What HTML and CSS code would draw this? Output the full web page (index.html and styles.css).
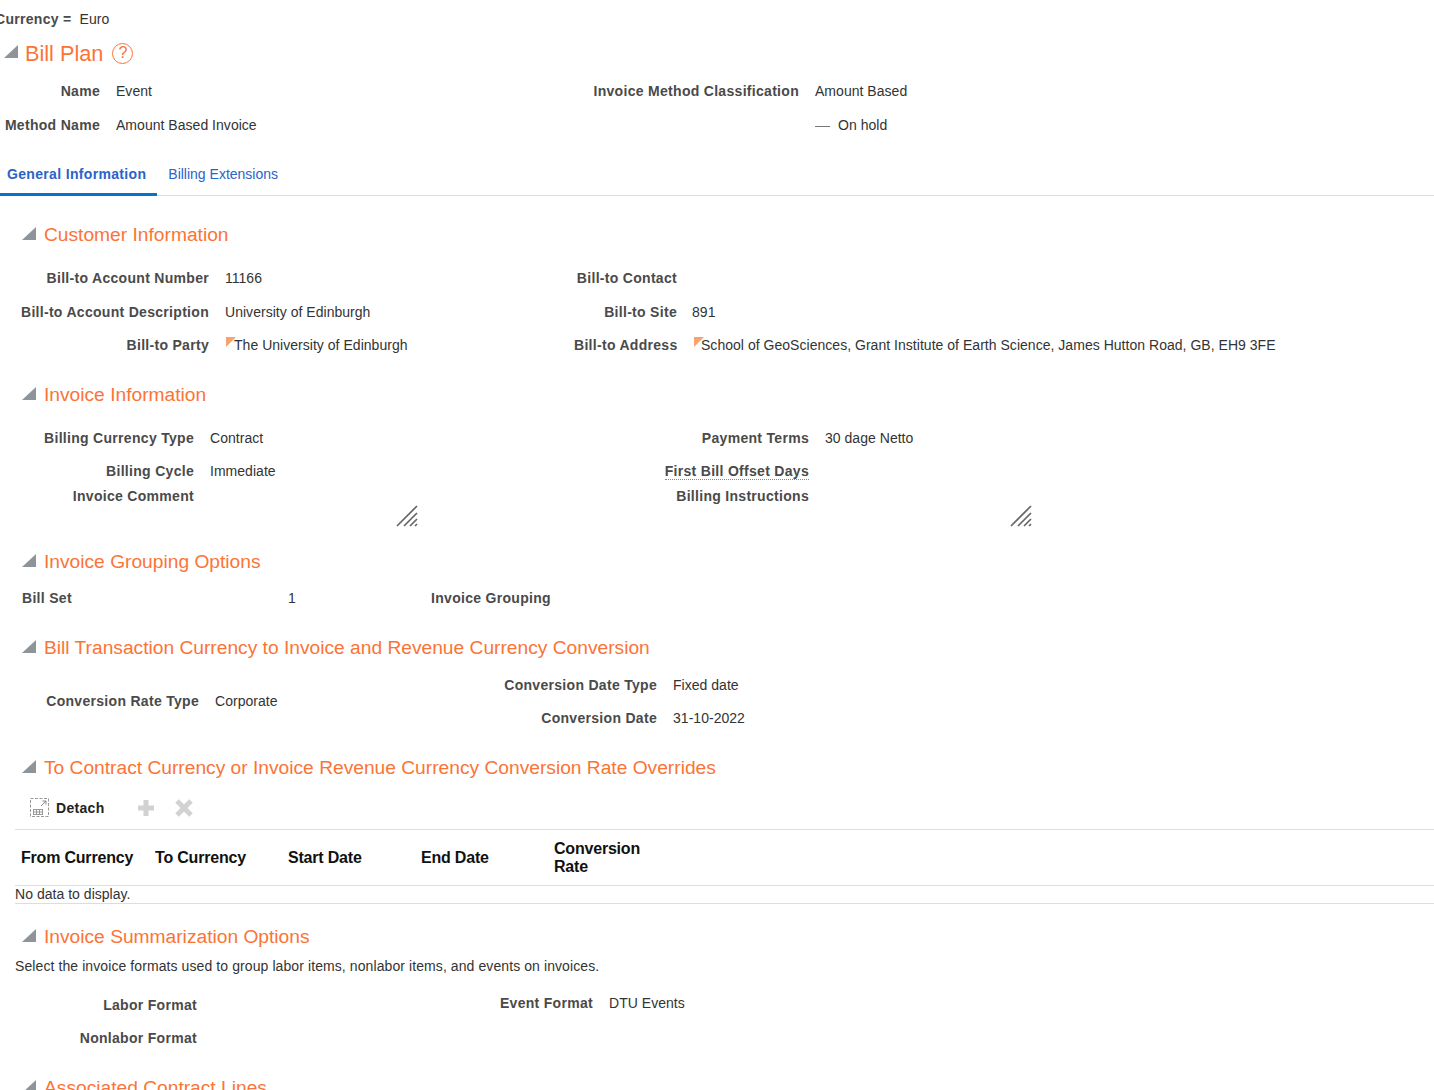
FILE: index.html
```html
<!DOCTYPE html>
<html lang="en">
<head>
<meta charset="utf-8">
<title>Bill Plan</title>
<link rel="stylesheet" href="styles.css">
</head>
<body>
<div class="page">
  <div class="currency"><span class="label">Currency =</span><span class="cur-val">Euro</span></div>

  <h1 class="main-head">
    <svg class="tri" viewBox="0 0 14 14"><path d="M0 13L14 0V13Z"/></svg>
    <span>Bill Plan</span>
    <span class="help">?</span>
  </h1>

  <div class="form form-plan">
    <div class="label">Name</div><div class="val">Event</div>
    <div class="label">Invoice Method Classification</div><div class="val">Amount Based</div>
    <div class="label">Method Name</div><div class="val">Amount Based Invoice</div>
    <div></div><div class="val"><span class="dash"></span>On hold</div>
  </div>

  <div class="tabs">
    <div class="tab active">General Information</div>
    <div class="tab">Billing Extensions</div>
  </div>

  <section class="sec sec-customer">
    <h2 class="head"><svg class="tri" viewBox="0 0 14 14"><path d="M0 13L14 0V13Z"/></svg>Customer Information</h2>
    <div class="form form-customer">
      <div class="label">Bill-to Account Number</div><div class="val">11166</div>
      <div class="label">Bill-to Contact</div><div class="val"></div>
      <div class="label">Bill-to Account Description</div><div class="val">University of Edinburgh</div>
      <div class="label">Bill-to Site</div><div class="val val-site">891</div>
      <div class="label">Bill-to Party</div><div class="val val-party"><span class="mark"></span>The University of Edinburgh</div>
      <div class="label">Bill-to Address</div><div class="val val-addr"><span class="mark"></span>School of GeoSciences, Grant Institute of Earth Science, James Hutton Road, GB, EH9 3FE</div>
    </div>
  </section>

  <section class="sec sec-invoice">
    <h2 class="head"><svg class="tri" viewBox="0 0 14 14"><path d="M0 13L14 0V13Z"/></svg>Invoice Information</h2>
    <div class="form form-invoice">
      <div class="label">Billing Currency Type</div><div class="val">Contract</div>
      <div class="label">Payment Terms</div><div class="val">30 dage Netto</div>
      <div class="label">Billing Cycle</div><div class="val">Immediate</div>
      <div class="label"><span class="dotted">First Bill Offset Days</span></div><div class="val"></div>
      <div class="label">Invoice Comment</div>
      <div class="area"><svg class="grip" viewBox="0 0 22 22"><path d="M1 21L21 1M8 21L21 8M14 21L21 14M19 21L21 19"/></svg></div>
      <div class="label">Billing Instructions</div>
      <div class="area area-r"><svg class="grip" viewBox="0 0 22 22"><path d="M1 21L21 1M8 21L21 8M14 21L21 14M19 21L21 19"/></svg></div>
    </div>
  </section>

  <section class="sec sec-group">
    <h2 class="head"><svg class="tri" viewBox="0 0 14 14"><path d="M0 13L14 0V13Z"/></svg>Invoice Grouping Options</h2>
    <div class="group-row">
      <div class="label g1">Bill Set</div><div class="val g2">1</div><div class="label">Invoice Grouping</div>
    </div>
  </section>

  <section class="sec sec-conv">
    <h2 class="head"><svg class="tri" viewBox="0 0 14 14"><path d="M0 13L14 0V13Z"/></svg>Bill Transaction Currency to Invoice and Revenue Currency Conversion</h2>
    <div class="form form-conv">
      <div class="label span2">Conversion Rate Type</div><div class="val span2">Corporate</div>
      <div class="label">Conversion Date Type</div><div class="val">Fixed date</div>
      <div class="label">Conversion Date</div><div class="val">31-10-2022</div>
    </div>
  </section>

  <section class="sec sec-over">
    <h2 class="head"><svg class="tri" viewBox="0 0 14 14"><path d="M0 13L14 0V13Z"/></svg>To Contract Currency or Invoice Revenue Currency Conversion Rate Overrides</h2>
    <div class="toolbar">
      <svg class="ic-detach" viewBox="0 0 20 20">
        <rect x="0.5" y="0.5" width="18" height="18" fill="none" stroke="#999" stroke-dasharray="3 1.5"/>
        <path d="M11 8L16 3M12.5 3H16V6.5" fill="none" stroke="#888"/>
        <rect x="3.5" y="11.5" width="9" height="5" fill="#fff" stroke="#999"/>
        <path d="M3.5 14H12.5M6.5 11.5V16.5M9.5 11.5V16.5" stroke="#999"/>
      </svg>
      <span class="detach">Detach</span>
      <svg class="ic-add" viewBox="0 0 18 18"><path d="M9 1V17M1 9H17" stroke="#d2d2d2" stroke-width="5"/></svg>
      <svg class="ic-del" viewBox="0 0 18 18"><path d="M2 2L16 16M16 2L2 16" stroke="#d2d2d2" stroke-width="5"/></svg>
    </div>
    <table class="grid">
      <thead>
        <tr><th>From Currency</th><th>To Currency</th><th>Start Date</th><th>End Date</th><th>Conversion<br>Rate</th><th class="fill"></th></tr>
      </thead>
    </table>
    <div class="nodata">No data to display.</div>
  </section>

  <section class="sec sec-summ">
    <h2 class="head"><svg class="tri" viewBox="0 0 14 14"><path d="M0 13L14 0V13Z"/></svg>Invoice Summarization Options</h2>
    <p class="note">Select the invoice formats used to group labor items, nonlabor items, and events on invoices.</p>
    <div class="form form-summ">
      <div class="label lower">Labor Format</div><div class="val"></div>
      <div class="label">Event Format</div><div class="val">DTU Events</div>
      <div class="label lower">Nonlabor Format</div><div class="val"></div>
      <div></div><div></div>
    </div>
  </section>

  <section class="sec sec-assoc">
    <h2 class="head"><svg class="tri" viewBox="0 0 14 14"><path d="M0 13L14 0V13Z"/></svg>Associated Contract Lines</h2>
  </section>
</div>
</body>
</html>
```

FILE: styles.css
```css
* { box-sizing: border-box; }
html, body { margin: 0; padding: 0; background: #fff; }
body { height: 1090px; overflow: hidden; font-family: "Liberation Sans", Arial, sans-serif; font-size: 14px; letter-spacing: 0.03px; color: #333; }
.page { width: 1434px; height: 1090px; overflow: hidden; }

.label { font-weight: 700; color: #4a4a4a; text-align: right; white-space: nowrap; letter-spacing: 0.3px; }
.val { padding-left: 16px; white-space: nowrap; color: #333; }

.currency { display: flex; height: 38px; align-items: center; margin-left: -5px; }
.cur-val { margin-left: 8px; }

.main-head { display: flex; align-items: center; margin: 0; padding-left: 4px; height: 30px; font-size: 21.7px; font-weight: 400; letter-spacing: 0; color: #fb7436; }
.tri { width: 14px; height: 14px; fill: #8f9499; flex: none; }
.main-head .tri { margin-right: 7px; margin-top: -2px; }
.help { display: inline-flex; align-items: center; justify-content: center; width: 21px; height: 21px; border: 1.5px solid #fb7436; border-radius: 50%; font-size: 16px; margin-left: 9px; }
.main-head > span:nth-of-type(1) { padding-top: 1px; }

.form { display: grid; }
.form > * { display: block; }

.form-plan { grid-template-columns: 100px 491px 208px 1fr; grid-auto-rows: 34px; line-height: 16px; margin-top: 6px; align-items: center; }
.dash { display: inline-block; width: 15px; height: 1px; background: #777; margin-right: 8px; vertical-align: 3px; }

.tabs { display: flex; height: 39px; margin-top: 15px; border-bottom: 1px solid #d6dfe6; }
.tab { padding: 0 10px 0 11px; line-height: 34px; color: #2a63c9; height: 39px; letter-spacing: 0; }
.tab.active { padding: 0 11px 0 7px; font-weight: 700; border-bottom: 3px solid #0572ce; letter-spacing: 0.33px; }

.head { display: flex; align-items: center; height: 26px; margin: 0 0 0 22px; font-size: 19.2px; font-weight: 400; letter-spacing: 0; color: #fb7436; white-space: nowrap; }
.head .tri { margin-right: 8px; margin-top: -2px; }

.sec-customer { padding-top: 26px; }
.form-customer { grid-template-columns: 209px 365px 103px 1fr; grid-template-rows: 34px 33px 34px; align-items: center; margin-top: 13px; }
.val-site { padding-left: 15px; }
.val-party { padding-left: 17px; }
.val-addr { padding-left: 17px; }
.mark { display: inline-block; width: 0; height: 0; border-top: 10px solid #f8a36e; border-right: 10px solid transparent; vertical-align: 3px; margin-right: -2px; }
.val-addr .mark { margin-right: -3px; }

.sec-invoice { padding-top: 20px; }
.form-invoice { grid-template-columns: 194px 405px 210px 1fr; grid-template-rows: 33px 25px 42px; margin-top: 22px; }
.form-invoice > .label, .form-invoice > .val { line-height: 16px; }
.dotted { border-bottom: 1px dotted #888; }
.area { height: 39px; width: 224px; display: flex; justify-content: flex-end; align-items: flex-end; }
.area-r { width: 223px; }
.grip { width: 22px; height: 22px; fill: none; stroke: #666; stroke-width: 1.7; display: block; }

.sec-group { padding-top: 19px; }
.group-row { display: flex; align-items: center; padding-left: 22px; height: 16px; margin-top: 15px; }
.g1 { width: 266px; text-align: left; }
.g2 { width: 143px; padding-left: 0; }

.sec-conv { padding-top: 29px; }
.form-conv { grid-template-columns: 199px 304px 154px 1fr; grid-template-rows: 33px 33px; align-items: center; margin-top: 7px; }
.span2 { grid-row: span 2; }

.sec-over { padding-top: 21px; }
.toolbar { display: flex; align-items: center; height: 36px; margin-top: 9px; padding-left: 30px; }
.ic-detach { width: 20px; height: 20px; flex: none; }
.detach { font-weight: 700; color: #222; margin-left: 6px; letter-spacing: 0.3px; }
.ic-add { width: 18px; height: 18px; margin-left: 33px; }
.ic-del { width: 18px; height: 18px; margin-left: 20px; }

.grid { border-collapse: collapse; margin: 3px 0 0 15px; width: 1419px; table-layout: fixed; }
.grid th { width: 133px; height: 56px; padding: 0 6px; text-align: left; vertical-align: middle; font-size: 16px; line-height: 18px; font-weight: 700; letter-spacing: -0.2px; color: #111; border-top: 1px solid #d6dfe6; border-bottom: 1px solid #d6dfe6; }
.grid th:nth-child(1) { width: 134px; }
.grid th.fill { width: auto; }
.nodata { margin-left: 15px; height: 18px; line-height: 17px; border-bottom: 1px solid #d6dfe6; }

.sec-summ { padding-top: 20px; }
.note { margin: 7px 0 0 15px; line-height: 18px; letter-spacing: 0.09px; }
.form-summ { grid-template-columns: 197px 302px 94px 1fr; grid-auto-rows: 33px; margin-top: 20px; }
.form-summ .lower { padding-top: 2px; }

.sec-assoc { padding-top: 14px; }
```
